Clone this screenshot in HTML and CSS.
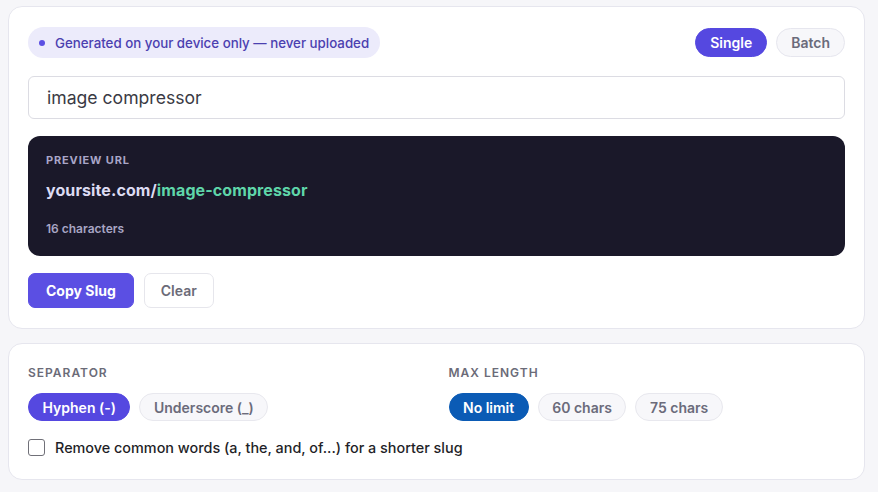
FILE: index.html
```html
<!DOCTYPE html>
<html lang="en">
<head>
<meta charset="utf-8">
<title>Slug Generator</title>
<link rel="stylesheet" href="styles.css">
</head>
<body>
<main class="wrap">
  <section class="card main-card">
    <div class="top-row">
      <div class="privacy"><span class="dot"></span>Generated on your device only — never uploaded</div>
      <div class="mode">
        <button class="pill pill-active">Single</button>
        <button class="pill">Batch</button>
      </div>
    </div>
    <input class="text-input" type="text" value="image compressor">
    <div class="preview">
      <div class="preview-label">PREVIEW URL</div>
      <div class="preview-url"><span class="domain">yoursite.com/</span><span class="slug">image-compressor</span></div>
      <div class="preview-count">16 characters</div>
    </div>
    <div class="actions">
      <button class="btn btn-primary">Copy Slug</button>
      <button class="btn btn-ghost">Clear</button>
    </div>
  </section>

  <section class="card options-card">
    <div class="options-grid">
      <div class="opt">
        <div class="opt-label">SEPARATOR</div>
        <div class="chips">
          <button class="chip chip-purple">Hyphen (-)</button>
          <button class="chip">Underscore (_)</button>
        </div>
      </div>
      <div class="opt">
        <div class="opt-label">MAX LENGTH</div>
        <div class="chips">
          <button class="chip chip-blue">No limit</button>
          <button class="chip">60 chars</button>
          <button class="chip">75 chars</button>
        </div>
      </div>
    </div>
    <label class="check"><span class="box"></span>Remove common words (a, the, and, of...) for a shorter slug</label>
  </section>
</main>
</body>
</html>
```
FILE: styles.css
```css
* { box-sizing: border-box; }
html, body { margin: 0; padding: 0; }
body {
  background: #f6f6f9;
  font-family: Inter, "Noto Sans", sans-serif;
  color: #1f1f28;
}
.wrap {
  width: 857px;
  margin: 0 0 0 8px;
  padding-top: 6px;
  display: flex;
  flex-direction: column;
  gap: 14px;
}
.card {
  background: #ffffff;
  border: 1px solid #e6e6ee;
  border-radius: 14px;
}
.main-card {
  padding: 20px 19px 20px 19px;
  display: flex;
  flex-direction: column;
}
.top-row {
  display: flex;
  justify-content: space-between;
  align-items: center;
  height: 31px;
}
.privacy {
  display: flex;
  align-items: center;
  height: 31px;
  padding: 0 11px 0 11px;
  background: #ecebfb;
  border-radius: 16px;
  font-size: 13.3px;
  color: #4b40b0;
  font-weight: 500;
  gap: 10px;
}
.dot {
  width: 6px;
  height: 6px;
  border-radius: 50%;
  background: #5b4fe3;
}
.mode { display: flex; gap: 9px; }
.pill {
  height: 29px;
  padding: 0 14px;
  border-radius: 15px;
  border: 1px solid #e6e6ee;
  background: #f7f7fa;
  color: #6b6b7b;
  font-family: inherit;
  font-size: 14px;
  font-weight: 600;
}
.pill-active {
  background: #5548e0;
  border-color: #5548e0;
  color: #ffffff;
}
.text-input {
  margin-top: 18px;
  height: 43px;
  width: 100%;
  border: 1px solid #dcdce3;
  border-radius: 6px;
  padding: 0 18px;
  font-family: inherit;
  font-size: 17.6px;
  color: #3a3a44;
  outline: none;
}
.preview {
  margin-top: 17px;
  height: 120px;
  background: #1a1829;
  border-radius: 12px;
  padding: 16px 18px 18px;
}
.preview-label {
  font-size: 11px;
  line-height: 16px;
  font-weight: 700;
  letter-spacing: 0.85px;
  color: #a9a6c8;
}
.preview-url {
  margin-top: 10px;
  font-size: 16px;
  line-height: 24px;
  font-weight: 700;
  letter-spacing: 0.1px;
}
.domain { color: #dddbf2; }
.slug { color: #5fd6a9; }
.preview-count {
  margin-top: 19px;
  font-size: 12px;
  line-height: 16px;
  font-weight: 600;
  color: #a8a5c4;
}
.actions {
  margin-top: 17px;
  display: flex;
  gap: 10px;
}
.btn {
  height: 35px;
  border-radius: 7px;
  font-family: inherit;
  font-size: 14px;
  font-weight: 700;
  padding: 0 17px;
}
.btn-primary {
  background: #5b4fe3;
  border: 1px solid #5b4fe3;
  color: #ffffff;
}
.btn-ghost {
  background: #ffffff;
  border: 1px solid #e6e6ec;
  color: #6b6b78;
  font-weight: 600;
  padding: 0 16px;
}
.options-card {
  padding: 20px 19px 23px;
}
.options-grid {
  display: grid;
  grid-template-columns: 1fr 1fr;
  gap: 24px;
}
.opt-label {
  font-size: 12px;
  line-height: 18px;
  font-weight: 600;
  letter-spacing: 1px;
  color: #6b6b78;
}
.chips {
  margin-top: 11px;
  display: flex;
  gap: 9px;
}
.chip {
  height: 28px;
  padding: 0 13.5px;
  border-radius: 14px;
  border: 1px solid #e8e8ee;
  background: #f7f7fa;
  color: #6b6b7b;
  font-family: inherit;
  font-size: 14px;
  font-weight: 600;
}
.chip-purple { background: #5548e0; border-color: #5548e0; color: #fff; }
.chip-blue { background: #0b5bb5; border-color: #0b5bb5; color: #fff; }
.check {
  margin-top: 18px;
  display: flex;
  align-items: center;
  gap: 10px;
  font-size: 14.4px;
  font-weight: 500;
  color: #1f1f28;
}
.box {
  width: 17px;
  height: 17px;
  border: 1.5px solid #707078;
  border-radius: 3px;
  background: #fff;
}
```
